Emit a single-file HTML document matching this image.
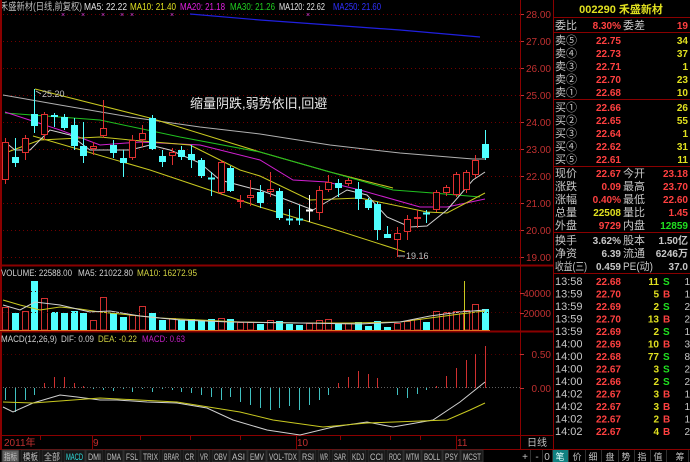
<!DOCTYPE html>
<html><head><meta charset="utf-8"><style>
html,body{margin:0;padding:0;background:#000;width:690px;height:462px;overflow:hidden;font-family:"Liberation Sans","Noto Sans CJK SC",sans-serif}
svg{position:absolute;left:0;top:0}
</style></head><body>
<svg id="s" width="690" height="462" xmlns="http://www.w3.org/2000/svg" font-family="Liberation Sans, Noto Sans CJK SC, sans-serif">
<rect width="690" height="462" fill="#000"/>
<g id="g"></g>
</svg>
<script>
var g=document.getElementById('g'),h='';
function L(x1,y1,x2,y2,c,w,d){h+='<line x1="'+x1+'" y1="'+y1+'" x2="'+x2+'" y2="'+y2+'" stroke="'+c+'" stroke-width="'+(w||1)+'"'+(d?' stroke-dasharray="'+d+'"':'')+'/>';}
function R(x,y,w,hh,f,s){h+='<rect x="'+x+'" y="'+y+'" width="'+w+'" height="'+hh+'" fill="'+f+'"'+(s?' stroke="'+s+'"':'')+'/>';}
function T(x,y,t,c,sz,a,fw){h+='<text x="'+x+'" y="'+y+'" fill="'+c+'" font-size="'+(sz||11)+'"'+(a?' text-anchor="'+a+'"':'')+(fw?' font-weight="bold"':'')+'>'+t+'</text>';}
function TL(x,y,t,c,sz,len,a){h+='<text x="'+x+'" y="'+y+'" fill="'+c+'" font-size="'+sz+'" textLength="'+len+'" lengthAdjust="spacingAndGlyphs"'+(a?' text-anchor="'+a+'"':'')+'>'+t+'</text>';}
function P(pts,c,w){h+='<polyline fill="none" stroke="'+c+'" stroke-width="'+(w||1)+'" points="'+pts.map(function(p){return p.join(',')}).join(' ')+'"/>';}
var BR='#8a0000';
for(var p=28;p>=19;p--){var y=14+(28-p)*27;L(3,y+0.5,520,y+0.5,'#700000',1,'1,3');T(551,y+4,p+'.00','#c03030',10,'end');L(520,y+0.5,524,y+0.5,'#c03030');}
P([[190,14],[260,20],[330,25],[400,30],[480,37]],'#2020e0',1.2);
[63,83,103,122,132,172,308].forEach(function(x){T(x,17,'×','#e040e0',7,'middle');});
P([[3,95],[60,105],[130,117],[200,127],[260,134],[330,145],[400,153],[473,159],[485,159]],'#b0b0b0');
P([[35,89],[150,118],[260,152],[330,172],[393,188]],'#c8c820');
P([[33,136],[150,170],[260,207],[330,228],[405,252]],'#c8c820');
P([[5,113],[100,120],[180,137],[260,152],[330,172],[393,190],[433,193],[480,197]],'#20c020');
P([[5,112],[60,130],[100,145],[140,142],[200,145],[260,160],[293,180],[327,182],[360,190],[420,207],[447,207],[485,199]],'#d020d0');
P([[5,153],[40,140],[100,137],[130,140],[190,145],[200,150],[240,170],[260,176],[310,200],[360,198],[427,212],[447,213],[485,193]],'#c8c820');
P([[5,142],[15,150],[30,150],[50,130],[70,135],[90,150],[110,150],[130,150],[150,145],[170,150],[200,163],[220,180],[250,188],[260,190],[287,200],[313,210],[347,190],[367,195],[387,217],[410,227],[427,226],[447,210],[473,180],[485,172]],'#d0d0d0');
var C=[[142,180,138,184,'r'],[157,163,138,167,'c'],[138,153,135,160,'r'],[114,126,89,133,'c'],[114,135,112,140,'r'],[115,117,113,127,'c'],[117,128,114,130,'c'],[125,146,118,150,'c'],[146,156,122,163,'c'],[146,149,142,155,'r'],[128,136,100,138,'r'],[145,153,140,158,'c'],[158,163,150,177,'c'],[140,158,135,160,'r'],[133,140,125,147,'r'],[118,149,115,150,'c'],[156,162,150,167,'c'],[152,156,148,165,'r'],[150,157,146,160,'c'],[154,160,145,168,'c'],[160,176,158,178,'c'],[178,179,172,196,'c'],[162,193,160,195,'r'],[168,191,166,192,'c'],[200,202,195,208,'r'],[195,198,180,206,'r'],[192,203,185,208,'c'],[189,192,172,197,'r'],[191,218,188,220,'c'],[219,219,209,225,'c'],[219,219,205,225,'c'],[210,210,195,222,'w'],[190,213,186,220,'r'],[182,190,175,192,'r'],[183,188,179,197,'c'],[180,184,178,186,'r'],[189,199,182,210,'c'],[200,208,198,210,'c'],[204,230,202,240,'c'],[234,238,226,238,'c'],[233,240,227,257,'r'],[219,232,215,240,'r'],[217,219,210,228,'r'],[213,213,210,223,'c'],[192,210,190,212,'r'],[187,193,185,196,'r'],[174,195,172,197,'r'],[172,190,170,193,'r'],[160,175,155,178,'r'],[144,158,130,160,'c']];
C.forEach(function(c,i){var x=Math.round(5+i*9.8);var col=c[4]=='c'?'#50ffff':(c[4]=='w'?'#ffffff':'#e03030');
L(x+0.5,c[2],x+0.5,c[3],col);
if(c[1]-c[0]<2){L(x-3,c[0]+0.5,x+4,c[0]+0.5,col,2);}
else if(c[4]=='c')R(x-3,c[0],7,c[1]-c[0],col);else R(x-2.5,c[0]+0.5,6,c[1]-c[0]-1,'#000',col);});
T(42,97,'25.20','#c0c0c0',9);L(36,91,41,94,'#c0c0c0');
T(406,259,'19.16','#c0c0c0',9);L(398,256,405,256,'#c0c0c0');
T(190,108,'缩量阴跌,弱势依旧,回避','#e8e8e8',13);
var tx=[[0,'禾盛新材(日线,前复权)','#c0c0c0',82],[84,'MA5: 22.22','#e0e0e0',43],[130,'MA10: 21.40','#e0e020',46],[180,'MA20: 21.18','#e020e0',45],[230,'MA30: 21.26','#20d020',45],[279,'MA120: 22.62','#e0e0e0',46],[333,'MA250: 21.60','#3030ff',48]];
tx.forEach(function(t){TL(t[0],10,t[1],t[2],10,t[3]);});
L(0,265.5,553,265.5,BR,2);L(0,331.5,553,331.5,BR,2);L(0,435.5,553,435.5,BR,1);L(0,449.5,690,449.5,BR,1);
L(1,0,1,449,BR,2);L(520.5,0,520.5,449,BR);L(553.5,0,553.5,449,BR);
TL(1,276,'VOLUME: 22588.00','#d0d0d0',9,71);TL(78,276,'MA5: 21022.80','#d0d0d0',9,55);TL(137,276,'MA10: 16272.95','#d0d040',9,60);
var VB=[307,313,311,281,298,312,313,311,313,320,297,313,317,315,306,313,320,318,320,319,320,319,318,319,322,322,324,320,321,324,325,323,320,319,323,323,322,326,321,327,323,321,319,322,311,312,311,310,304,309];
VB.forEach(function(t,i){var x=Math.round(2+i*9.8);var c=C[i][4]=='c';if(c)R(x,t,7,330-t,'#50ffff');else R(x+0.5,t+0.5,6,329.5-t,'none','#d03030');});
L(464.5,281,464.5,330,'#c8c820');L(0,330.5,490,330.5,'#e07020');
P([[3,300],[20,305],[40,310],[60,307],[80,309],[100,312],[130,315],[160,318],[200,320],[240,322],[300,323],[350,323],[400,322],[430,318],[460,314],[485,311]],'#c8c820');
P([[3,305],[20,310],[35,302],[60,305],[90,312],[110,311],[140,316],[180,320],[230,322],[300,323],[360,324],[400,322],[430,316],[460,312],[485,310]],'#d0d0d0');
L(520,293.5,524,293.5,'#c03030');L(520,313.5,524,313.5,'#c03030');T(551,297,'40000','#c03030',10,'end');T(551,317,'20000','#c03030',10,'end');
L(3,312.5,520,312.5,'#500000',1,'1,3');L(3,291.5,520,291.5,'#500000',1,'1,3');
TL(1,342,'MACD(12,26,9)','#d0d0d0',9,56);TL(61,342,'DIF: 0.09','#d0d0d0',9,33);TL(98,342,'DEA: -0.22','#d0d040',9,39);TL(142,342,'MACD: 0.63','#c020c0',9,43);
L(3,354.5,520,354.5,'#500000',1,'1,3');L(3,387.5,520,387.5,'#606060',1,'1,2');
var MH=[400,412,400,395,383,377,377,383,386,389,390,391,389,392,389,392,389,390,392,393,395,397,400,397,402,405,408,410,408,406,410,405,400,395,383,377,371,374,378,388,395,398,394,390,386,376,368,360,354,346];
MH.forEach(function(v,i){var x=Math.round(5+i*9.8)+0.5;L(x,388,x,v,v>388?'#40c0c0':'#d03030');});
P([[3,407],[13,412],[33,403],[60,395],[77,397],[100,400],[117,400],[147,402],[177,403],[207,408],[233,420],[267,430],[300,435],[333,427],[367,422],[393,427],[433,420],[460,402],[485,382]],'#d0d0d0');
P([[3,402],[33,403],[100,398],[177,402],[240,412],[273,420],[323,427],[367,423],[447,420],[470,410],[485,403]],'#c8c820');
L(520,354.5,524,354.5,'#c03030');L(520,388.5,524,388.5,'#c03030');T(551,358,'0.50','#c03030',10,'end');T(551,392,'0.00','#c03030',10,'end');
T(4,446,'2011年','#c03030',10);T(93,446,'9','#c03030',10);T(297,446,'10','#c03030',10);T(457,446,'11','#c03030',10);
[92,296,456].forEach(function(x){L(x+0.5,436,x+0.5,449,BR);});
[40,140,190,240,340,390,420].forEach(function(x){L(x+.5,436,x+.5,440,BR);});
T(537,446,'日线','#c0c0c0',10,'middle');
var tabs=[[2,19,'指标'],[21,40,'模板'],[42,62,'全部'],[64,85,'MACD'],[86,103,'DMI'],[105,123,'DMA'],[124,140,'FSL'],[141,160,'TRIX'],[162,181,'BRAR'],[183,196,'CR'],[198,210,'VR'],[212,229,'OBV'],[230,247,'ASI'],[248,266,'EMV'],[267,299,'VOL-TDX'],[300,316,'RSI'],[318,330,'WR'],[332,348,'SAR'],[350,366,'KDJ'],[368,385,'CCI'],[387,403,'ROC'],[404,421,'MTM'],[422,442,'BOLL'],[443,460,'PSY'],[461,483,'MCST']];
tabs.forEach(function(t,i){R(t[0],450,t[1]-t[0],12,i==0?'#606060':'#181818','#303030');var w=t[1]-t[0]-4;TL(t[0]+2,460,t[2],i==3?'#30e0e0':'#c0c0c0',9,w);});
var rt=[['+',525],['-',537],['0',547],['笔',560],['价',577],['细',593],['盘',610],['势',626],['指',642],['值',658],['筹',680]];
rt.forEach(function(t,i){if(i==3)R(553,450,15,12,'#108080');T(t[1],460,t[0],i==3?'#e0ffff':'#c0c0c0',i<3?10:9,'middle');L(t[1]+(i<3?5.5:8.5),450,t[1]+(i<3?5.5:8.5),462,'#303030');});
T(621,13,'002290 禾盛新材','#e0e020',11,'middle',1);
[17.5,32.5,99.5,166.5,232.5,273.5].forEach(function(y){L(553,y,690,y,BR);});
var lab='#c8c8c8',red='#ff4040',yel='#e0e020',grn='#20e020';
function row(y,a,b,bc,c,d,dc,aw,cw){if(aw)TL(555,y,a,lab,11,aw);else T(555,y,a,lab,11);T(621,y,b,bc,10,'end',1);if(c){if(cw)TL(623,y,c,lab,11,cw);else T(623,y,c,lab,11);}T(688,y,d,dc,10,'end',1);}
row(29,'委比','8.30%',red,'委差','19',red);
var s=[['卖⑤','22.75','34'],['卖④','22.73','37'],['卖③','22.71','1'],['卖②','22.70','23'],['卖①','22.68','10']];
s.forEach(function(r,i){row(44+i*13,r[0],r[1],red,'',r[2],yel,22);});
var b=[['买①','22.66','26'],['买②','22.65','55'],['买③','22.64','1'],['买④','22.62','31'],['买⑤','22.61','11']];
b.forEach(function(r,i){row(111+i*13,r[0],r[1],red,'',r[2],yel,22);});
row(177,'现价','22.67',red,'今开','23.18',red);
row(190,'涨跌','0.09',red,'最高','23.70',red);
row(203,'涨幅','0.40%',red,'最低','22.60',red);
row(216,'总量','22508',yel,'量比','1.45',red);
row(229,'外盘','9729',red,'内盘','12859',grn);
row(244,'换手','3.62%',lab,'股本','1.50亿',lab);
row(257,'净资','6.39',lab,'流通','6246万',lab);
row(270,'收益(三)','0.459',lab,'PE(动)','37.0',lab,32,30);
var tr=[['13:58','22.68','11','S','1'],['13:59','22.70','5','B','1'],['13:59','22.69','2','S','2'],['13:59','22.70','13','B','2'],['13:59','22.69','2','S','1'],['14:00','22.69','10','B','3'],['14:00','22.68','77','S','8'],['14:00','22.67','3','S','2'],['14:00','22.66','2','S','2'],['14:02','22.67','3','B','1'],['14:02','22.67','3','B','1'],['14:02','22.67','2','B','1'],['14:02','22.67','4','B','2']];
tr.forEach(function(r,i){var y=285+i*12.5;T(555,y,r[0],lab,11);T(621,y,r[1],red,10,'end',1);T(659,y,r[2],yel,10,'end',1);T(663,y,r[3],r[3]=='S'?grn:red,10,'',1);T(690,y,r[4],lab,10,'end');});
g.innerHTML=h;
</script>
</body></html>
